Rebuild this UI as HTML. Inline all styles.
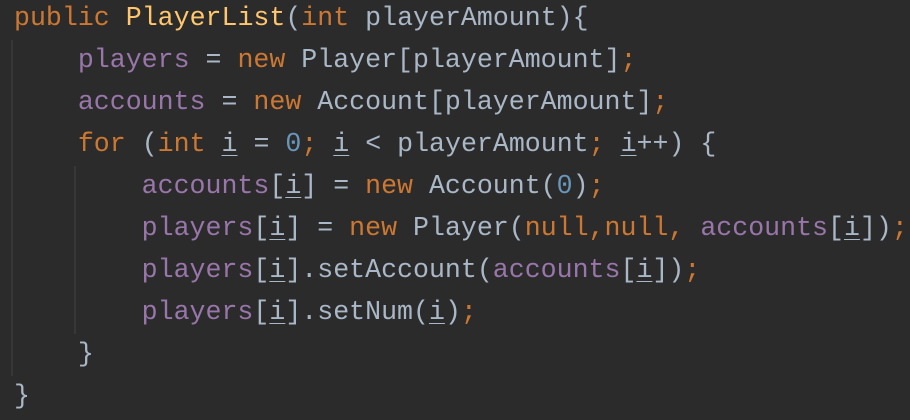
<!DOCTYPE html>
<html><head><meta charset="utf-8"><style>
html,body{margin:0;padding:0;background:#2b2b2b;width:910px;height:420px;overflow:hidden}
pre{position:absolute;left:14px;top:-3px;margin:0;font-family:"Liberation Mono",monospace;font-size:26.6px;line-height:42px;color:#a9b7c6;letter-spacing:0}
.k{color:#cc7832}.p{color:#9876aa}.m{color:#ffc66d}.n{color:#6897bb}
u{text-decoration:underline;text-underline-offset:4px;text-decoration-thickness:1px}
.g{position:absolute;width:2px;background:#373737}
</style></head><body>
<div class="g" style="left:11px;top:40px;height:336px"></div>
<div class="g" style="left:74px;top:166px;height:168px"></div>
<pre><span class="k">public</span> <span class="m">PlayerList</span>(<span class="k">int</span> playerAmount){
    <span class="p">players</span> = <span class="k">new</span> Player[playerAmount]<span class="k">;</span>
    <span class="p">accounts</span> = <span class="k">new</span> Account[playerAmount]<span class="k">;</span>
    <span class="k">for</span> (<span class="k">int</span> <u>i</u> = <span class="n">0</span><span class="k">;</span> <u>i</u> &lt; playerAmount<span class="k">;</span> <u>i</u>++) {
        <span class="p">accounts</span>[<u>i</u>] = <span class="k">new</span> Account(<span class="n">0</span>)<span class="k">;</span>
        <span class="p">players</span>[<u>i</u>] = <span class="k">new</span> Player(<span class="k">null</span><span class="k">,</span><span class="k">null</span><span class="k">,</span> <span class="p">accounts</span>[<u>i</u>])<span class="k">;</span>
        <span class="p">players</span>[<u>i</u>].setAccount(<span class="p">accounts</span>[<u>i</u>])<span class="k">;</span>
        <span class="p">players</span>[<u>i</u>].setNum(<u>i</u>)<span class="k">;</span>
    }
}</pre>
</body></html>
